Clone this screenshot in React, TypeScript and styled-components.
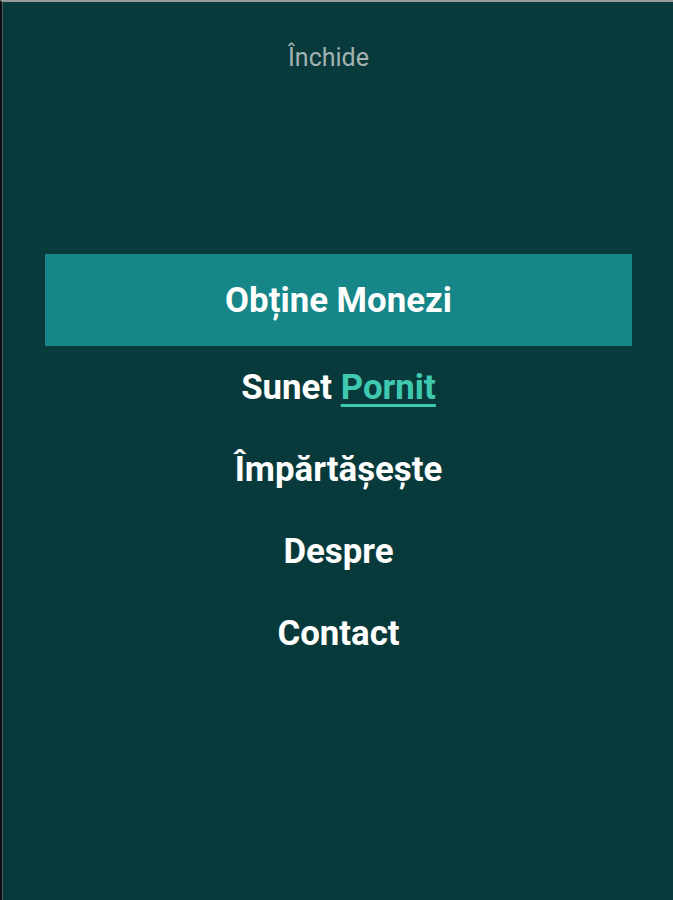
import React from 'react';
import styled, { createGlobalStyle } from 'styled-components';

const GlobalStyle = createGlobalStyle`
  html, body {
    margin: 0;
    padding: 0;
    background: #093a3b;
  }
  * {
    box-sizing: border-box;
  }
`;

const Screen = styled.div`
  width: 673px;
  height: 900px;
  background-color: #093a3b;
  border-top: 2px solid #979b9b;
  border-left: 2px solid #0c0f0f;
  box-shadow: inset 1px 0 0 #4d5b5b;
  display: flex;
  flex-direction: column;
  font-family: Roboto, 'Noto Sans', sans-serif;
`;

const CloseButton = styled.button`
  align-self: center;
  margin: 40px 0 0 -18px;
  padding: 0;
  background: none;
  border: none;
  color: #a3b2b2;
  font-family: inherit;
  font-size: 25px;
  line-height: 32px;
  cursor: pointer;
`;

const Menu = styled.nav`
  margin: 180px 41px 0 43px;
  display: flex;
  flex-direction: column;
`;

const MenuItem = styled.a<{ $active?: boolean }>`
  display: flex;
  align-items: center;
  justify-content: center;
  height: ${(p) => (p.$active ? '92px' : '82px')};
  background-color: ${(p) => (p.$active ? '#168688' : 'transparent')};
  color: #ffffff;
  font-size: 34.8px;
  font-weight: 700;
  text-decoration: none;
  white-space: pre;
  cursor: pointer;
`;

const Toggle = styled.span`
  color: #40c9b1;
  text-decoration: underline;
  text-decoration-thickness: 3px;
  text-underline-offset: 5px;
`;

const App: React.FC = () => {
  return (
    <>
      <GlobalStyle />
      <Screen>
        <CloseButton>Închide</CloseButton>
        <Menu>
          <MenuItem $active>Obține Monezi</MenuItem>
          <MenuItem>
            Sunet <Toggle>Pornit</Toggle>
          </MenuItem>
          <MenuItem>Împărtășește</MenuItem>
          <MenuItem>Despre</MenuItem>
          <MenuItem>Contact</MenuItem>
        </Menu>
      </Screen>
    </>
  );
};

export default App;
